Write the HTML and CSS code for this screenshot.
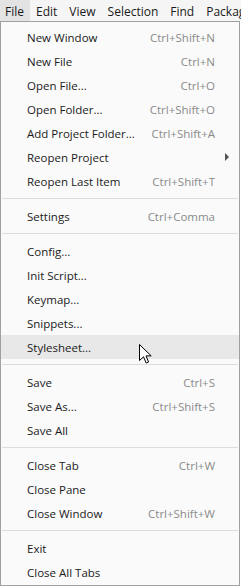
FILE: index.html
```html
<!DOCTYPE html>
<html>
<head>
<meta charset="utf-8">
<link rel="stylesheet" href="styles.css">
</head>
<body>
<div class="menubar">
  <span class="mb-item active">File</span>
  <span class="mb-item">Edit</span>
  <span class="mb-item">View</span>
  <span class="mb-item">Selection</span>
  <span class="mb-item">Find</span>
  <span class="mb-item">Packages</span>
</div>
<div class="menu">
  <div class="item"><span class="label">New Window</span><span class="key">Ctrl+Shift+N</span></div>
  <div class="item"><span class="label">New File</span><span class="key">Ctrl+N</span></div>
  <div class="item"><span class="label">Open File...</span><span class="key">Ctrl+O</span></div>
  <div class="item"><span class="label">Open Folder...</span><span class="key">Ctrl+Shift+O</span></div>
  <div class="item"><span class="label">Add Project Folder...</span><span class="key">Ctrl+Shift+A</span></div>
  <div class="item"><span class="label">Reopen Project</span><span class="key"></span><span class="arrow"></span></div>
  <div class="item"><span class="label">Reopen Last Item</span><span class="key">Ctrl+Shift+T</span></div>
  <div class="sep"></div>
  <div class="item"><span class="label">Settings</span><span class="key">Ctrl+Comma</span></div>
  <div class="sep"></div>
  <div class="item"><span class="label">Config...</span><span class="key"></span></div>
  <div class="item"><span class="label">Init Script...</span><span class="key"></span></div>
  <div class="item"><span class="label">Keymap...</span><span class="key"></span></div>
  <div class="item"><span class="label">Snippets...</span><span class="key"></span></div>
  <div class="item hover"><span class="label">Stylesheet...</span><span class="key"></span>
    <svg class="cursor" width="13" height="20" viewBox="0 0 13 20"><path d="M0.5 0.5 L0.5 16.5 L4.5 12.8 L7.2 19 L9.6 18 L7 11.9 L12.2 11.9 Z" fill="#fff" stroke="#000" stroke-width="1" stroke-linejoin="miter"/></svg>
  </div>
  <div class="sep"></div>
  <div class="item"><span class="label">Save</span><span class="key">Ctrl+S</span></div>
  <div class="item"><span class="label">Save As...</span><span class="key">Ctrl+Shift+S</span></div>
  <div class="item"><span class="label">Save All</span><span class="key"></span></div>
  <div class="sep"></div>
  <div class="item"><span class="label">Close Tab</span><span class="key">Ctrl+W</span></div>
  <div class="item"><span class="label">Close Pane</span><span class="key"></span></div>
  <div class="item"><span class="label">Close Window</span><span class="key">Ctrl+Shift+W</span></div>
  <div class="sep"></div>
  <div class="item"><span class="label">Exit</span><span class="key"></span></div>
  <div class="item"><span class="label">Close All Tabs</span><span class="key"></span></div>
</div>
</body>
</html>
```
FILE: styles.css
```css
html, body {
  margin: 0;
  padding: 0;
  background: #ffffff;
  overflow: hidden;
}
body {
  width: 241px;
  height: 586px;
  font-family: "Open Sans", "Noto Sans", sans-serif;
  font-size: 11.5px;
  color: #1a1a1a;
}
.menubar {
  display: flex;
  height: 21px;
  background: #f5f5f5;
  white-space: nowrap;
  overflow: hidden;
  font-size: 12px;
}
.mb-item {
  padding: 2px 6px 0 5px;
  line-height: 19px;
  margin-right: 1px;
}
.mb-item.active {
  background: #e3e3e3;
}
.menu {
  width: 238px;
  height: 560px;
  border: 1px solid #a0a0a0;
  background: #fafafa;
  padding-top: 3px;
  box-sizing: content-box;
}
.item {
  position: relative;
  display: flex;
  align-items: center;
  height: 24px;
  padding: 0 24px 0 26px;
}
.item.hover {
  background: #e8e8e8;
}
.label {
  flex: 1;
  white-space: nowrap;
}
.key {
  color: #8a8a8a;
  white-space: nowrap;
}
.arrow {
  position: absolute;
  right: 10px;
  top: 8px;
  width: 0;
  height: 0;
  border-top: 4px solid transparent;
  border-bottom: 4px solid transparent;
  border-left: 4px solid #505050;
}
.sep {
  height: 1px;
  background: #dcdcdc;
  margin: 5px 1px;
}
.cursor {
  position: absolute;
  left: 138px;
  top: 9px;
}
```
